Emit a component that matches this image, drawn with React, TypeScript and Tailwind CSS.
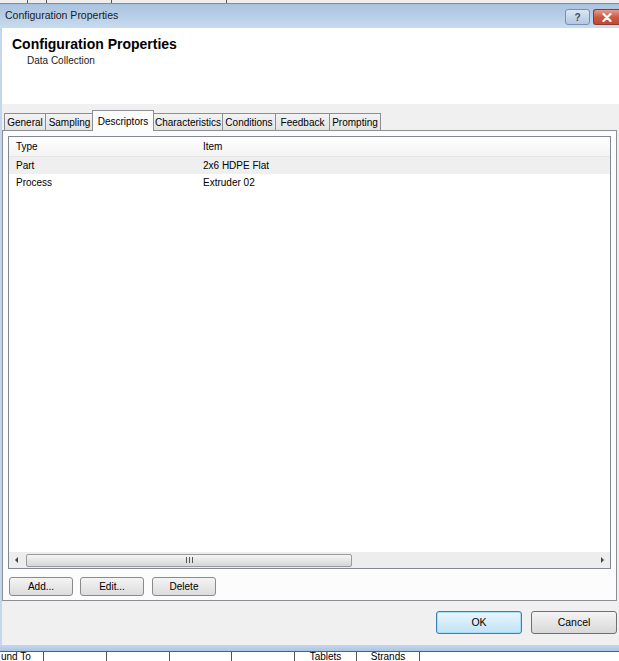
import React from 'react';

const tabs = [
  { label: 'General', w: 'w-[41px]' },
  { label: 'Sampling', w: 'w-[48px]' },
  { label: 'Descriptors', w: 'w-[62px]', active: true },
  { label: 'Characteristics', w: 'w-[69px]' },
  { label: 'Conditions', w: 'w-[53px]' },
  { label: 'Feedback', w: 'w-[54px]' },
  { label: 'Prompting', w: 'w-[52px]' },
];

const rows = [
  { type: 'Part', item: '2x6 HDPE Flat', shaded: true },
  { type: 'Process', item: 'Extruder 02' },
];

const font = "font-['Liberation_Sans',Arial,sans-serif]";

const SmallButton = ({ label, className = '' }: { label: string; className?: string }) => (
  <div
    className={`flex h-[19px] w-[64px] items-center justify-center rounded-[3px] border border-[#8a8a8a] bg-gradient-to-b from-[#f4f4f4] to-[#dcdcdc] text-[10px] text-black ${className}`}
  >
    {label}
  </div>
);

const App: React.FC = () => {
  return (
    <div className={`relative flex h-[661px] w-[619px] flex-col overflow-hidden bg-white ${font}`}>
      {/* background app strip */}
      <div className="flex h-[4px] border-b border-[#7d8ea3] bg-[#eeeeee]">
        <div className="w-[28px] border-r border-[#555]" />
        <div className="w-[19px] border-r border-[#555]" />
        <div className="w-[65px] border-r border-[#555]" />
        <div className="w-[115px] border-r border-[#555]" />
      </div>

      {/* title bar */}
      <div className="flex h-[24px] items-center justify-between bg-gradient-to-b from-[#a9c2de] to-[#c8dbef] pl-[5px]">
        <span className="text-[10.5px] text-[#1b1b1b]">Configuration Properties</span>
        <div className="flex h-[16px] items-stretch gap-[3px] self-start mt-[5px]">
          <div className="flex w-[25px] items-center justify-center rounded-[3px] border border-[#7890ad] bg-gradient-to-b from-[#dbe6f3] to-[#b3c8e1] text-[10px] font-bold text-[#3a4a60]">
            ?
          </div>
          <div className="flex w-[26px] items-center justify-center rounded-l-[3px] border border-r-0 border-[#8a3a30] bg-gradient-to-b from-[#e49d8f] via-[#cc5a45] to-[#c04a33]">
            <svg width="10" height="9" viewBox="0 0 10 9">
              <path d="M1.5 1 L8.5 8 M8.5 1 L1.5 8" stroke="#fff" strokeWidth="2.2" strokeLinecap="round" />
            </svg>
          </div>
        </div>
      </div>

      {/* header */}
      <div className="flex h-[76px] flex-col border-l-2 border-[#c4d6ec] bg-white pl-[10px] pt-[8px]">
        <div className="text-[14px] font-bold leading-[16px] text-black">Configuration Properties</div>
        <div className="mt-[3px] pl-[15px] text-[10px] leading-[12px] text-[#1a1a1a]">Data Collection</div>
      </div>

      {/* body */}
      <div className="flex h-[541px] flex-col border-l-2 border-[#c4d6ec] bg-[#f0f0f0]">
        {/* tabs */}
        <div className="flex h-[21px] items-end pl-[2px] pt-[6px] box-content">
          {tabs.map((t) =>
            t.active ? (
              <div
                key={t.label}
                className={`${t.w} -mx-[1px] z-10 flex h-[21px] items-start justify-center border border-b-0 border-[#8c8e94] bg-[#fcfcfc] pt-[3px] text-[10px] text-black`}
              >
                {t.label}
              </div>
            ) : (
              <div
                key={t.label}
                className={`${t.w} flex h-[18px] items-center justify-center border border-b-0 border-r-0 last:border-r border-[#8c8e94] bg-gradient-to-b from-[#f3f3f3] to-[#e2e2e2] text-[10px] text-black`}
              >
                {t.label}
              </div>
            ),
          )}
        </div>

        {/* tab page */}
        <div className="-mt-[1px] mr-[2px] flex h-[471px] flex-col border border-[#8c8e94] bg-[#fcfcfc] px-[5px] pt-[5px]">
          {/* list view */}
          <div className="flex h-[433px] flex-col border border-[#828790] bg-white">
            <div className="flex h-[20px] items-center border-b border-[#e6e6e6] bg-gradient-to-b from-[#ffffff] to-[#f3f3f3] text-[10px] text-black">
              <div className="w-[194px] pl-[7px]">Type</div>
              <div>Item</div>
            </div>
            {rows.map((r) => (
              <div
                key={r.type}
                className={`flex h-[17px] items-center text-[10px] text-black ${r.shaded ? 'bg-[#efefef]' : ''}`}
              >
                <div className="w-[194px] pl-[7px]">{r.type}</div>
                <div>{r.item}</div>
              </div>
            ))}
            <div className="flex-1" />
            {/* horizontal scrollbar */}
            <div className="flex h-[16px] items-center bg-[#ededed] px-[3px]">
              <svg width="10" height="10" viewBox="0 0 10 10">
                <path d="M6 2 L3 5 L6 8 Z" fill="#444" />
              </svg>
              <div className="ml-[4px] flex h-[13px] w-[326px] items-center justify-center rounded-[2px] border border-[#9a9a9a] bg-gradient-to-b from-[#f5f5f5] to-[#d6d6d6]">
                <div className="flex gap-[2px]">
                  <div className="h-[6px] w-[1px] bg-[#555]" />
                  <div className="h-[6px] w-[1px] bg-[#555]" />
                  <div className="h-[6px] w-[1px] bg-[#555]" />
                </div>
              </div>
              <div className="flex-1" />
              <svg width="10" height="10" viewBox="0 0 10 10">
                <path d="M4 2 L7 5 L4 8 Z" fill="#444" />
              </svg>
            </div>
          </div>

          {/* list buttons */}
          <div className="mt-[8px] flex gap-[7px] pl-[1px]">
            <SmallButton label="Add..." />
            <SmallButton label="Edit..." />
            <SmallButton label="Delete" className="ml-[1px]" />
          </div>
        </div>

        {/* dialog buttons */}
        <div className="mt-[10px] flex justify-end gap-[9px] pr-[2px]">
          <div className="flex h-[23px] w-[86px] items-center justify-center rounded-[3px] border border-[#3c7fb1] bg-gradient-to-b from-[#eaf6fd] to-[#bfe3f6] text-[10.5px] text-black shadow-[inset_0_0_0_1px_#a6dcf5]">
            OK
          </div>
          <div className="flex h-[23px] w-[86px] items-center justify-center rounded-[3px] border border-[#707070] bg-gradient-to-b from-[#f4f4f4] to-[#d8d8d8] text-[10.5px] text-black">
            Cancel
          </div>
        </div>
      </div>

      {/* window frame bottom */}
      <div className="h-[6px] bg-gradient-to-b from-[#c4d7ec] to-[#aac6e4]" />
      <div className="h-[1px] bg-[#3d6a80]" />

      {/* background app row */}
      <div className="flex h-[9px] items-start overflow-hidden bg-white text-[10px] leading-[10px] text-black">
        <div className="w-[44px] border-r border-[#555] h-[12px] pl-[1px]">und To</div>
        <div className="w-[63px] border-r border-[#555] h-[12px]" />
        <div className="w-[63px] border-r border-[#555] h-[12px]" />
        <div className="w-[62px] border-r border-[#555] h-[12px]" />
        <div className="w-[63px] border-r border-[#555] h-[12px]" />
        <div className="w-[62px] border-r border-[#555] h-[12px] text-center">Tablets</div>
        <div className="w-[63px] border-r border-[#555] h-[12px] text-center">Strands</div>
      </div>
    </div>
  );
};

export default App;
